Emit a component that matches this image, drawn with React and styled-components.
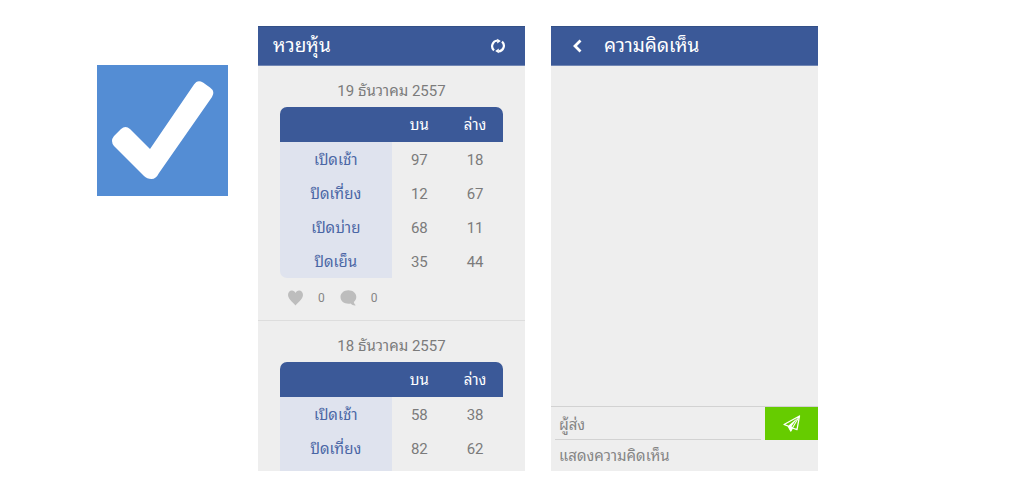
import React from "react";
import styled, { createGlobalStyle } from "styled-components";

const GlobalStyle = createGlobalStyle`
  *, *::before, *::after { box-sizing: border-box; }
  body {
    margin: 0;
    background: #fff;
    color: #7b7b7b;
    font-family: Roboto, "Noto Sans Thai Looped", Loma, Waree, Garuda, sans-serif;
    font-size: 15px;
  }
`;

const Showcase = styled.main`
  display: flex;
  align-items: stretch;
  gap: 26px;
  height: 100vh;
  min-height: 320px;
  padding: 26px 206px 29px 97px;
`;

const Logo = styled.svg`
  flex: none;
  width: 131px;
  height: 131px;
  margin: 39px 4px 0 0;
  background: #548dd4;
`;

const Phone = styled.section`
  display: flex;
  flex: 1;
  flex-direction: column;
  min-width: 0;
  overflow: hidden;
  background: #eee;
`;

const TopBar = styled.header`
  display: flex;
  flex: none;
  align-items: center;
  height: 40px;
  padding: 0 15px;
  background: #3b5998;
  border-top: 1px solid #335087;
  border-bottom: 1px solid #7186b3;
  color: #fff;
`;

const Title = styled.h1`
  flex: 1;
  margin: 0;
  font-size: 19px;
  font-weight: 400;
  line-height: 24px;
`;

const BarButton = styled.button`
  display: flex;
  align-items: center;
  justify-content: center;
  width: 24px;
  height: 24px;
  margin-right: ${(p) => (p.$back ? "14px" : "0")};
  padding: 0;
  border: 0;
  background: none;
  color: inherit;
`;

const Day = styled.article`
  flex: none;
  padding: 13px 22px 0;
  border-bottom: 1px solid #ddd;
`;

const DayTitle = styled.h2`
  margin: 0 0 4px;
  font-size: 15px;
  font-weight: 400;
  line-height: 24px;
  text-align: center;
`;

const Results = styled.table`
  width: 100%;
  table-layout: fixed;
  border-collapse: separate;
  border-spacing: 0;
  border-radius: 7px;
  overflow: hidden;
`;

const HeadCell = styled.th`
  width: ${(p) => (p.$wide ? "50%" : "25%")};
  height: 35px;
  padding: 0;
  background: #3b5998;
  color: #fff;
  font-weight: 400;
  line-height: 20px;
`;

const RowHead = styled.th`
  height: 34px;
  padding: 2px 0 0;
  background: #dfe3ee;
  color: #4a66a5;
  font-weight: 400;
  line-height: 20px;
`;

const Cell = styled.td`
  padding: 2px 0 0;
  line-height: 20px;
  text-align: center;
`;

const Reactions = styled.div`
  display: flex;
  align-items: center;
  gap: 15px;
  height: 42px;
  padding: 0 7px 2px;
`;

const Reaction = styled.button`
  display: flex;
  align-items: center;
  gap: 14px;
  padding: 0;
  border: 0;
  background: none;
  color: #858585;
  font: inherit;
  font-size: 12px;
  line-height: 16px;

  svg { color: #bdbdbd; }
`;

const Messages = styled.div`
  flex: 1;
`;

const Composer = styled.form`
  flex: none;
  border-top: 1px solid #d2d2d2;
`;

const SenderRow = styled.div`
  display: flex;
  gap: 4px;
  height: 33px;
  padding-left: 4px;
`;

const Field = styled.input`
  flex: 1;
  display: block;
  width: 100%;
  min-width: 0;
  height: 31px;
  padding: ${(p) => (p.$sender ? "4px 4px 0" : "0 8px")};
  border: 0;
  outline: 0;
  background: none;
  color: #555;
  font: inherit;

  &::placeholder { color: #858585; opacity: 1; }
  ${(p) => p.$sender && "height: 33px; border-bottom: 1px solid #d2d2d2;"}
`;

const SendButton = styled.button`
  display: flex;
  align-items: center;
  justify-content: center;
  width: 53px;
  padding: 0;
  border: 0;
  background: #66cc00;
  color: #fff;
`;

const CheckLogo = () => (
  <Logo viewBox="0 0 131 131" role="img">
    <path
      fill="#fff"
      d="M24 64Q28.5 60 33 64L53 84L97 19.500Q100.500 14 106 17.500L113 22.500Q118.500 26.500 115 32L62 108Q59 114 54.500 114Q50 114 47 111L17 81Q13 76 17 71Z"
    />
  </Logo>
);

const RefreshIcon = () => (
  <svg width="16" height="16" viewBox="0 0 16 16" fill="none" stroke="currentColor" strokeWidth="2.2">
    <path d="M4 12.400A5.700 5.700 0 0 1 7.500 2.500M12 3.600A5.700 5.700 0 0 1 8.500 13.500" />
    <path fill="currentColor" stroke="none" d="M7.200.8L10.800 3.100L7.200 5.400ZM8.800 10.600V15.200L5.200 12.900Z" />
  </svg>
);

const BackIcon = () => (
  <svg width="12" height="14" viewBox="0 0 12 14" fill="none" stroke="currentColor" strokeWidth="2.8">
    <path d="M8.5 1.500L3 7L8.500 12.500" />
  </svg>
);

const HeartIcon = () => (
  <svg width="17" height="16" viewBox="0 0 17 16" fill="currentColor">
    <path d="M8.5 15.5C7.6 13.8 1 9.4 1 5.1C1 2.4 2.7.5 4.9.5C6.6.5 7.9 1.4 8.5 2.9C9.1 1.4 10.4.5 12.1.5C14.3.5 16 2.4 16 5.1C16 9.4 9.4 13.8 8.5 15.5Z" />
  </svg>
);

const CommentIcon = () => (
  <svg width="17" height="16" viewBox="0 0 17 16" fill="currentColor">
    <path d="M8.3.2C12.9.2 16.3 3 16.3 7C16.3 9 15.3 10.8 13.8 12C14.1 13.5 14.8 14.5 16 15.3C14 15.8 12 15 10.6 13.5C5.3 14.4.5 11.8.5 7C.5 3 3.9.2 8.3.2Z" />
  </svg>
);

const PlaneIcon = () => (
  <svg width="18" height="18" viewBox="0 0 18 18" fill="none" stroke="currentColor" strokeLinejoin="round">
    <path strokeWidth="1.3" d="M16.500 1L1 9.500L5.200 11.200L7.800 16L9.400 13L14 14.700Z" />
    <path strokeWidth="1.1" d="M16.500 1L9.400 13" />
    <path fill="currentColor" stroke="none" d="M5 11L15 2.500L8.600 11.200L9.800 13L7.800 16.500Z" />
  </svg>
);

const days = [
  {
    date: "19 ธันวาคม 2557",
    rows: [
      ["เปิดเช้า", 97, 18],
      ["ปิดเที่ยง", 12, 67],
      ["เปิดบ่าย", 68, 11],
      ["ปิดเย็น", 35, 44],
    ],
    likes: 0,
    comments: 0,
  },
  {
    date: "18 ธันวาคม 2557",
    rows: [
      ["เปิดเช้า", 58, 38],
      ["ปิดเที่ยง", 82, 62],
      ["", "", ""],
    ],
  },
];

function DayResults({ date, rows, likes, comments }) {
  return (
    <Day>
      <DayTitle>{date}</DayTitle>
      <Results>
        <thead>
          <tr>
            <HeadCell $wide />
            <HeadCell scope="col">บน</HeadCell>
            <HeadCell scope="col">ล่าง</HeadCell>
          </tr>
        </thead>
        <tbody>
          {rows.map(([name, top, bottom]) => (
            <tr key={name}>
              <RowHead scope="row">{name}</RowHead>
              <Cell>{top}</Cell>
              <Cell>{bottom}</Cell>
            </tr>
          ))}
        </tbody>
      </Results>
      {likes !== undefined && (
        <Reactions>
          <Reaction type="button"><HeartIcon />{likes}</Reaction>
          <Reaction type="button"><CommentIcon />{comments}</Reaction>
        </Reactions>
      )}
    </Day>
  );
}

export default function App() {
  return (
    <>
      <GlobalStyle />
      <Showcase>
        <CheckLogo />
        <Phone>
          <TopBar>
            <Title>หวยหุ้น</Title>
            <BarButton type="button" aria-label="รีเฟรช"><RefreshIcon /></BarButton>
          </TopBar>
          {days.map((day) => (
            <DayResults key={day.date} {...day} />
          ))}
        </Phone>
        <Phone>
          <TopBar>
            <BarButton type="button" $back aria-label="กลับ"><BackIcon /></BarButton>
            <Title>ความคิดเห็น</Title>
          </TopBar>
          <Messages />
          <Composer onSubmit={(e) => e.preventDefault()}>
            <SenderRow>
              <Field $sender type="text" placeholder="ผู้ส่ง" aria-label="ผู้ส่ง" />
              <SendButton type="submit" aria-label="ส่ง"><PlaneIcon /></SendButton>
            </SenderRow>
            <Field type="text" placeholder="แสดงความคิดเห็น" aria-label="แสดงความคิดเห็น" />
          </Composer>
        </Phone>
      </Showcase>
    </>
  );
}
